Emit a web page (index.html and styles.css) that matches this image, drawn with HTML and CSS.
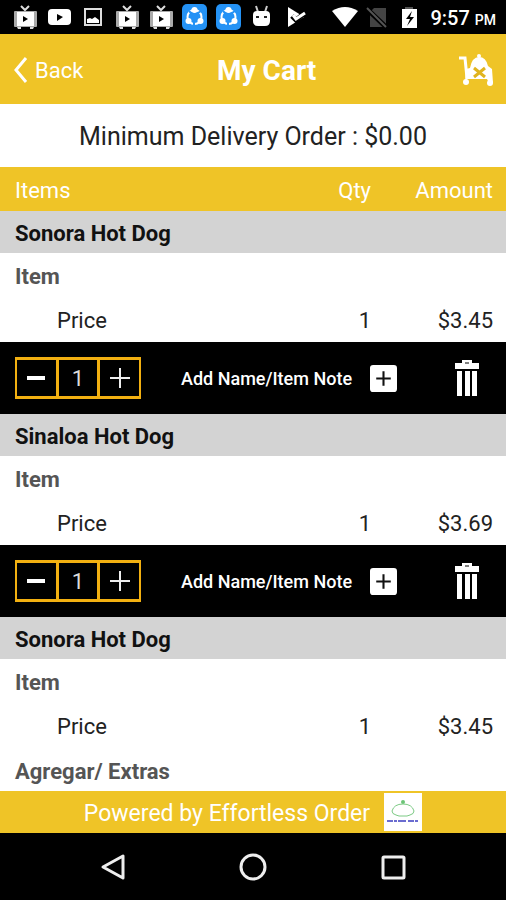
FILE: index.html
```html
<!DOCTYPE html>
<html lang="en">
<head>
<meta charset="utf-8">
<meta name="viewport" content="width=device-width, initial-scale=1">
<title>My Cart</title>
<link rel="stylesheet" href="styles.css">
</head>
<body>
<svg class="defs" aria-hidden="true">
  <symbol id="tv" viewBox="0 0 26 26">
    <path d="M9 2l4 4 4-4" fill="none" stroke="#ddd" stroke-width="2"/>
    <rect x="2" y="7" width="23" height="16" rx="1" fill="#aaa"/>
    <rect x="5" y="8" width="17" height="14" fill="#fff"/>
    <path d="M5 23h4v2H6zM18 23h4l-1 2h-3z" fill="#ddd"/>
    <path d="M11 12l5 3-5 3z" fill="#000"/>
  </symbol>
  <symbol id="share" viewBox="0 0 26 26">
    <rect x="0" y="0" width="25" height="26" rx="5" fill="#2492f5"/>
    <circle cx="12.500" cy="13" r="7" fill="none" stroke="#fff" stroke-width="2"/>
    <path d="M7 7l3 3M16 9l3-2M12 18v4" stroke="#2492f5" stroke-width="2"/>
    <circle cx="12.500" cy="6" r="3" fill="#fff"/>
    <circle cx="6.500" cy="17" r="3" fill="#fff"/>
    <circle cx="18.500" cy="17" r="3" fill="#fff"/>
  </symbol>
  <symbol id="trash" viewBox="0 0 26 38">
    <path d="M8 1h10v3h7v6H1V4h7z" fill="#fff"/>
    <path d="M11 4h4" stroke="#000" stroke-width="1"/>
    <path d="M3 12h5v25H3zM11 12h5v25h-5zM18 12h5v25h-5z" fill="#fff"/>
  </symbol>
  <symbol id="add" viewBox="0 0 26 26">
    <rect width="26" height="26" rx="3" fill="#fff"/>
    <path d="M6 13h14M13 6v14" stroke="#111" stroke-width="2"/>
  </symbol>
  <symbol id="minus" viewBox="0 0 20 20"><path d="M1 10h18" stroke="#fff" stroke-width="4"/></symbol>
  <symbol id="plus" viewBox="0 0 20 20"><path d="M0 10h20M10 0v20" stroke="#eee" stroke-width="2"/></symbol>
</svg>
<div class="screen">
  <div class="status">
    <div class="notices">
      <svg><use href="#tv"/></svg>
      <svg viewBox="0 0 26 26"><rect x="2" y="5" width="23" height="16" rx="4" fill="#fff"/><path d="M11 10l6 3-6 4z" fill="#000"/></svg>
      <svg viewBox="0 0 26 26"><rect x="5" y="5" width="16" height="16" fill="none" stroke="#ddd" stroke-width="2"/><path d="M7 19v-4l3-1 2 1 3-2 4 3v3z" fill="#fff"/></svg>
      <svg><use href="#tv"/></svg>
      <svg><use href="#tv"/></svg>
      <svg><use href="#share"/></svg>
      <svg><use href="#share"/></svg>
      <svg viewBox="0 0 26 26"><path d="M6 2l2 6M17 2l-2 6" stroke="#ccc" stroke-width="2"/><path d="M3 11q0-4 4-4h9q4 0 4 4v6q0 5-5 5H8q-5 0-5-5z" fill="#fff"/><path d="M6 12h3v2H6zM14 12h3v2h-3z" fill="#222"/></svg>
      <svg viewBox="0 0 26 26"><path d="M4 3l16 10L4 23z" fill="#fff"/><path d="M8 12l4 4 9-7" fill="none" stroke="#000" stroke-width="5"/><path d="M9 11l3 4 9-6" fill="none" stroke="#fff" stroke-width="3"/></svg>
    </div>
    <div class="signals">
      <svg viewBox="0 0 26 26"><path d="M0 7Q13-1 26 7L13 23z" fill="#fff"/></svg>
      <svg viewBox="0 0 26 26"><path d="M10 4h12v19H6V8z" fill="#444"/><path d="M3 5l19 18" stroke="#000" stroke-width="5"/><path d="M3 4l19 19" stroke="#555" stroke-width="2"/></svg>
      <svg viewBox="0 0 26 26"><path d="M9 3h8v3H9z" fill="#555"/><rect x="6" y="5" width="15" height="19" fill="#fff"/><path d="M16 7l-6 8h4l-3 7 7-9h-4z" fill="#000"/></svg>
      <span class="clock">9:57 <small>PM</small></span>
    </div>
  </div>

  <header class="bar">
    <a class="back" href="#back"><svg viewBox="0 0 14 26"><path d="M12 1L2 13l10 12" fill="none" stroke="#fff" stroke-width="3"/></svg>Back</a>
    <h1>My Cart</h1>
    <button class="plain cart" aria-label="Clear cart">
      <svg viewBox="0 0 36 34"><path d="M1 5h6l2 20" fill="none" stroke="#fff" stroke-width="3"/><circle cx="21" cy="3" r="2" fill="#fff"/><path d="M8 16l4-1q2-11 9-11t9 9l4 3 1 14h-4l-2-4H9v4H7z" fill="#fff"/><circle cx="8" cy="29" r="3" fill="#fff"/><circle cx="32" cy="30" r="3" fill="#fff"/><path d="M16 15l11 9M27 15l-11 9" stroke="#e0b41f" stroke-width="3"/></svg>
    </button>
  </header>

  <p class="minimum">Minimum Delivery Order : $0.00</p>

  <main>
    <table>
      <colgroup><col><col class="col-qty"><col class="col-amount"></colgroup>
      <thead><tr><th>Items</th><th class="num">Qty</th><th class="num">Amount</th></tr></thead>
      <tbody>
        <tr class="name"><th colspan="3">Sonora Hot Dog</th></tr>
        <tr class="group"><th colspan="3">Item</th></tr>
        <tr class="price"><td>Price</td><td class="num">1</td><td class="num">$3.45</td></tr>
        <tr class="tools"><td colspan="3"><div class="actions">
          <div class="stepper"><button aria-label="Decrease"><svg><use href="#minus"/></svg></button><output>1</output><button aria-label="Increase"><svg><use href="#plus"/></svg></button></div>
          <button class="plain note">Add Name/Item Note<svg><use href="#add"/></svg></button>
          <button class="plain trash" aria-label="Remove"><svg><use href="#trash"/></svg></button>
        </div></td></tr>
      </tbody>
      <tbody>
        <tr class="name"><th colspan="3">Sinaloa Hot Dog</th></tr>
        <tr class="group"><th colspan="3">Item</th></tr>
        <tr class="price"><td>Price</td><td class="num">1</td><td class="num">$3.69</td></tr>
        <tr class="tools"><td colspan="3"><div class="actions">
          <div class="stepper"><button aria-label="Decrease"><svg><use href="#minus"/></svg></button><output>1</output><button aria-label="Increase"><svg><use href="#plus"/></svg></button></div>
          <button class="plain note">Add Name/Item Note<svg><use href="#add"/></svg></button>
          <button class="plain trash" aria-label="Remove"><svg><use href="#trash"/></svg></button>
        </div></td></tr>
      </tbody>
      <tbody>
        <tr class="name"><th colspan="3">Sonora Hot Dog</th></tr>
        <tr class="group"><th colspan="3">Item</th></tr>
        <tr class="price"><td>Price</td><td class="num">1</td><td class="num">$3.45</td></tr>
        <tr class="group"><th colspan="3">Agregar/ Extras</th></tr>
      </tbody>
    </table>
  </main>

  <footer class="powered">
    <span>Powered by Effortless Order</span>
    <svg viewBox="0 0 38 38"><rect width="38" height="38" fill="#fff"/><circle cx="19" cy="9" r="2" fill="#6cc476"/><path d="M12 22q-4-1-4-4 2-7 11-7t11 7q0 3-4 4l-3 1h-8z" fill="none" stroke="#7cca84" stroke-width="1"/><path d="M3 28h32" stroke="#6a6cd0" stroke-width="2" stroke-dasharray="6 1 3 1 8 2"/></svg>
  </footer>

  <nav class="system">
    <button class="plain" aria-label="Back"><svg viewBox="0 0 28 28"><path d="M24 3v22L4 14z" fill="none" stroke="#eee" stroke-width="3" stroke-linejoin="round"/></svg></button>
    <button class="plain" aria-label="Home"><svg viewBox="0 0 28 28"><circle cx="14" cy="14" r="12" fill="none" stroke="#eee" stroke-width="3"/></svg></button>
    <button class="plain" aria-label="Recent apps"><svg viewBox="0 0 28 28"><rect x="4" y="4" width="21" height="21" rx="1" fill="none" stroke="#eee" stroke-width="3"/></svg></button>
  </nav>
</div>
</body>
</html>
```
FILE: styles.css
```css
* { box-sizing: border-box; }
body {
  margin: 0;
  font-family: Roboto, "Liberation Sans", sans-serif;
  font-size: 22px;
  color: #222;
  background: #fff;
}
.defs { position: absolute; width: 0; height: 0; }
svg { display: block; }
.screen { display: flex; flex-direction: column; height: 100vh; }
.plain { border: 0; padding: 0; background: none; color: inherit; font: inherit; }

.status {
  display: flex;
  justify-content: space-between;
  align-items: center;
  height: 34px;
  flex: none;
  padding: 0 10px 0 12px;
  background: #000;
  color: #fff;
}
.notices { display: flex; gap: 8px; }
.signals { display: flex; align-items: center; gap: 6px; }
.status svg { width: 26px; height: 26px; }
.clock { margin-left: 2px; padding-top: 2px; font-size: 20px; font-weight: 500; white-space: nowrap; }
.clock small { font-size: 14px; }

.bar {
  display: grid;
  grid-template-columns: auto 1fr auto;
  align-items: center;
  height: 70px;
  flex: none;
  padding: 2px 12px 0 14px;
  background: #efc427;
  color: #fff;
}
.back { display: flex; align-items: center; gap: 7px; color: inherit; text-decoration: none; }
.back svg { width: 14px; height: 26px; }
h1 { margin: 0; font-size: 28px; font-weight: 700; text-align: center; }
.cart { padding-left: 8px; }
.cart svg { width: 36px; height: 34px; }

.minimum {
  display: flex;
  align-items: center;
  justify-content: center;
  height: 63px;
  flex: none;
  margin: 0;
  padding-top: 2px;
  font-size: 25px;
}

main { flex: 1; min-height: 0; overflow: hidden; }
table { width: 100%; border-collapse: collapse; table-layout: fixed; }
.col-qty { width: 80px; }
.col-amount { width: 135px; }
th, td { padding: 0 0 0 15px; text-align: left; }
th.num, td.num { padding: 0; text-align: right; }
th.num:last-child, td.num:last-child { padding-right: 13px; }
thead tr { height: 44px; background: #efc427; color: #fff; }
thead th, thead th.num { padding-top: 2px; font-weight: 400; }
.name { height: 42px; background: #d3d3d3; color: #111; }
.group { height: 45px; color: #555; }
.name th, .group th { padding-top: 2px; font-weight: 700; }
.price { height: 44px; }
.price td:first-child { padding-left: 57px; }
.tools { height: 72px; background: #000; color: #fff; }

.actions { display: flex; align-items: center; padding-right: 26px; }
.stepper {
  display: grid;
  grid-template-columns: repeat(3, 1fr);
  gap: 3px;
  width: 126px;
  height: 42px;
  border: 3px solid #f2b011;
  border-width: 3px 2px;
  background: #f2b011;
}
.stepper button, .stepper output {
  display: flex;
  align-items: center;
  justify-content: center;
  border: 0;
  padding: 0;
  background: #000;
  color: #ddd;
}
.stepper svg { width: 20px; height: 20px; }
.note { display: flex; align-items: center; gap: 18px; margin-left: 40px; font-size: 18px; font-weight: 500; white-space: nowrap; }
.note svg { width: 27px; height: 27px; }
.trash { margin-left: auto; }
.trash svg { width: 26px; height: 38px; }

.powered {
  display: flex;
  align-items: center;
  justify-content: center;
  gap: 14px;
  height: 42px;
  flex: none;
  background: #efc427;
  color: #fff;
  font-size: 23px;
}
.powered span { padding-top: 2px; }
.powered svg { width: 38px; height: 38px; }

.system {
  display: flex;
  align-items: center;
  justify-content: center;
  gap: 112px;
  height: 67px;
  flex: none;
  background: #000;
}
.system svg { width: 28px; height: 28px; }
```
